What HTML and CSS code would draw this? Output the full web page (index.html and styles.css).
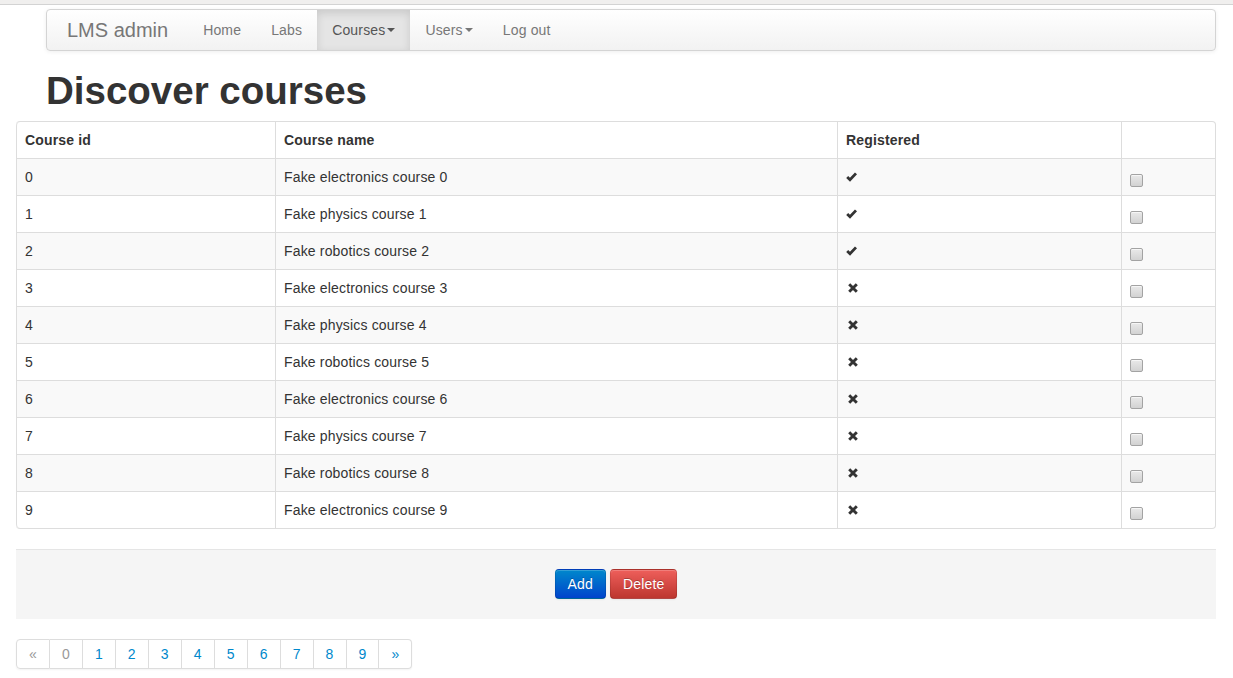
FILE: index.html
```html
<!DOCTYPE html>
<html>
<head>
<meta charset="utf-8">
<title>LMS admin</title>
<link rel="stylesheet" href="styles.css">
</head>
<body>
<div class="topstrip"></div>
<div class="page">
  <div class="container">
    <div class="navbar">
      <a class="brand" href="#">LMS admin</a>
      <ul class="nav">
        <li><a href="#">Home</a></li>
        <li><a href="#">Labs</a></li>
        <li class="active"><a href="#">Courses<b class="caret"></b></a></li>
        <li><a href="#">Users<b class="caret"></b></a></li>
        <li><a href="#">Log out</a></li>
      </ul>
    </div>
    <h1 class="title">Discover courses</h1>
  </div>

  <table class="courses">
    <thead>
      <tr><th class="c-id">Course id</th><th class="c-name">Course name</th><th class="c-reg">Registered</th><th class="c-sel"></th></tr>
    </thead>
    <tbody>
      <tr><td>0</td><td>Fake electronics course 0</td><td><svg class="icon" viewBox="0 0 14 14"><path d="M1.2 7 L4 9.8 L10 3.4" fill="none" stroke="#333" stroke-width="2.8"/></svg></td><td><input type="checkbox" class="cb"></td></tr>
      <tr><td>1</td><td>Fake physics course 1</td><td><svg class="icon" viewBox="0 0 14 14"><path d="M1.2 7 L4 9.8 L10 3.4" fill="none" stroke="#333" stroke-width="2.8"/></svg></td><td><input type="checkbox" class="cb"></td></tr>
      <tr><td>2</td><td>Fake robotics course 2</td><td><svg class="icon" viewBox="0 0 14 14"><path d="M1.2 7 L4 9.8 L10 3.4" fill="none" stroke="#333" stroke-width="2.8"/></svg></td><td><input type="checkbox" class="cb"></td></tr>
      <tr><td>3</td><td>Fake electronics course 3</td><td><svg class="icon" viewBox="0 0 14 14"><path d="M3.2 3.2 L10.8 10.8 M10.8 3.2 L3.2 10.8" fill="none" stroke="#333" stroke-width="2.9"/></svg></td><td><input type="checkbox" class="cb"></td></tr>
      <tr><td>4</td><td>Fake physics course 4</td><td><svg class="icon" viewBox="0 0 14 14"><path d="M3.2 3.2 L10.8 10.8 M10.8 3.2 L3.2 10.8" fill="none" stroke="#333" stroke-width="2.9"/></svg></td><td><input type="checkbox" class="cb"></td></tr>
      <tr><td>5</td><td>Fake robotics course 5</td><td><svg class="icon" viewBox="0 0 14 14"><path d="M3.2 3.2 L10.8 10.8 M10.8 3.2 L3.2 10.8" fill="none" stroke="#333" stroke-width="2.9"/></svg></td><td><input type="checkbox" class="cb"></td></tr>
      <tr><td>6</td><td>Fake electronics course 6</td><td><svg class="icon" viewBox="0 0 14 14"><path d="M3.2 3.2 L10.8 10.8 M10.8 3.2 L3.2 10.8" fill="none" stroke="#333" stroke-width="2.9"/></svg></td><td><input type="checkbox" class="cb"></td></tr>
      <tr><td>7</td><td>Fake physics course 7</td><td><svg class="icon" viewBox="0 0 14 14"><path d="M3.2 3.2 L10.8 10.8 M10.8 3.2 L3.2 10.8" fill="none" stroke="#333" stroke-width="2.9"/></svg></td><td><input type="checkbox" class="cb"></td></tr>
      <tr><td>8</td><td>Fake robotics course 8</td><td><svg class="icon" viewBox="0 0 14 14"><path d="M3.2 3.2 L10.8 10.8 M10.8 3.2 L3.2 10.8" fill="none" stroke="#333" stroke-width="2.9"/></svg></td><td><input type="checkbox" class="cb"></td></tr>
      <tr><td>9</td><td>Fake electronics course 9</td><td><svg class="icon" viewBox="0 0 14 14"><path d="M3.2 3.2 L10.8 10.8 M10.8 3.2 L3.2 10.8" fill="none" stroke="#333" stroke-width="2.9"/></svg></td><td><input type="checkbox" class="cb"></td></tr>
    </tbody>
  </table>

  <div class="form-actions">
    <button class="btn btn-primary">Add</button>
    <button class="btn btn-danger">Delete</button>
  </div>

  <ul class="pagination">
    <li class="disabled"><a href="#">&laquo;</a></li>
    <li class="active"><a href="#">0</a></li>
    <li><a href="#">1</a></li>
    <li><a href="#">2</a></li>
    <li><a href="#">3</a></li>
    <li><a href="#">4</a></li>
    <li><a href="#">5</a></li>
    <li><a href="#">6</a></li>
    <li><a href="#">7</a></li>
    <li><a href="#">8</a></li>
    <li><a href="#">9</a></li>
    <li><a href="#">&raquo;</a></li>
  </ul>
</div>
</body>
</html>
```

FILE: styles.css
```css
html, body {
  margin: 0;
  padding: 0;
}
body {
  font-family: "Liberation Sans", Arial, Helvetica, sans-serif;
  font-size: 14px;
  line-height: 20px;
  letter-spacing: 0.16px;
  color: #333;
  background: #fff;
}
a { text-decoration: none; }

.topstrip {
  height: 4px;
  background: #f0efee;
  border-bottom: 1px solid #d3d3d3;
}

.page {
  width: 1200px;
  margin-left: 16px;
}

.container {
  width: 1170px;
  margin-left: 30px;
}

/* navbar */
.navbar {
  margin-top: 4px;
  margin-bottom: 20px;
  height: 42px;
  box-sizing: border-box;
  padding: 0 20px;
  display: flex;
  background: linear-gradient(to bottom, #ffffff, #f2f2f2);
  border: 1px solid #d4d4d4;
  border-radius: 4px;
  box-shadow: 0 1px 4px rgba(0,0,0,0.065);
}
.brand {
  display: block;
  margin-left: -20px;
  padding: 10px 20px;
  font-size: 20px;
  font-weight: 200;
  letter-spacing: 0;
  color: #777;
}
.nav {
  display: flex;
  list-style: none;
  margin: 0;
  padding: 0;
}
.nav a {
  display: block;
  padding: 10px 15px;
  color: #777;
  line-height: 20px;
}
.nav .active a {
  color: #555;
  background: #e5e5e5;
  box-shadow: inset 0 3px 8px rgba(0,0,0,0.125);
}
.caret {
  display: inline-block;
  width: 0;
  height: 0;
  margin-top: 8px;
  margin-left: 2px;
  vertical-align: top;
  border-top: 4px solid #777;
  border-left: 4px solid transparent;
  border-right: 4px solid transparent;
}
.nav .active .caret { border-top-color: #555; }

.title {
  margin: 0 0 10px;
  font-size: 38.5px;
  line-height: 40px;
  font-weight: bold;
  letter-spacing: 0;
  color: #333;
}

/* table */
.courses {
  width: 1200px;
  border-collapse: separate;
  border-spacing: 0;
  border: 1px solid #ddd;
  border-left: 0;
  border-radius: 4px;
  margin-bottom: 20px;
  table-layout: fixed;
}
.courses th, .courses td {
  padding: 8px;
  line-height: 20px;
  text-align: left;
  vertical-align: top;
  border-left: 1px solid #ddd;
  border-top: 1px solid #ddd;
}
.courses thead th { border-top: 0; font-weight: bold; }
.courses tbody tr:nth-child(odd) td { background: #f9f9f9; }
.courses thead th:first-child { border-top-left-radius: 4px; }
.courses thead th:last-child { border-top-right-radius: 4px; }
.courses tbody tr:last-child td:first-child { border-bottom-left-radius: 4px; }
.courses tbody tr:last-child td:last-child { border-bottom-right-radius: 4px; }
.c-id { width: 242px; }
.c-name { width: 545px; }
.c-reg { width: 267px; }
.c-sel { width: 77px; }

.icon {
  display: inline-block;
  width: 14px;
  height: 14px;
  vertical-align: top;
  margin-top: 3px;
}

.cb {
  -webkit-appearance: none;
  appearance: none;
  display: inline-block;
  vertical-align: top;
  box-sizing: border-box;
  width: 13px;
  height: 13px;
  margin: 7px 0 0 0;
  border: 1px solid #a3a3a3;
  border-radius: 2px;
  background: linear-gradient(to bottom, #e9e9e9, #d2d2d2);
  box-shadow: inset 0 1px 0 rgba(255,255,255,0.6);
}

/* form actions */
.form-actions {
  margin: 20px 0;
  padding: 19px 20px 20px;
  background: #f5f5f5;
  border-top: 1px solid #e5e5e5;
  display: flex;
  justify-content: center;
  gap: 4px;
}
.btn {
  font-family: inherit;
  font-size: 14px;
  line-height: 20px;
  letter-spacing: 0.16px;
  padding: 4px 12px;
  margin: 0;
  color: #fff;
  text-shadow: 0 -1px 0 rgba(0,0,0,0.25);
  border: 1px solid;
  border-color: rgba(0,0,0,0.1) rgba(0,0,0,0.1) rgba(0,0,0,0.25);
  border-radius: 4px;
  box-shadow: inset 0 1px 0 rgba(255,255,255,0.2), 0 1px 2px rgba(0,0,0,0.05);
  cursor: pointer;
}
.btn-primary {
  background: linear-gradient(to bottom, #0088cc, #0044cc);
}
.btn-danger {
  background: linear-gradient(to bottom, #ee5f5b, #bd362f);
}

/* pagination */
.pagination {
  display: inline-flex;
  list-style: none;
  margin: 0 0 20px;
  padding: 0;
  border-radius: 4px;
  box-shadow: 0 1px 2px rgba(0,0,0,0.05);
}
.pagination a {
  display: block;
  padding: 4px 12px;
  line-height: 20px;
  color: #0088cc;
  background: #fff;
  border: 1px solid #ddd;
  border-left-width: 0;
}
.pagination li:first-child a {
  border-left-width: 1px;
  border-radius: 4px 0 0 4px;
}
.pagination li:last-child a {
  border-radius: 0 4px 4px 0;
}
.pagination .disabled a,
.pagination .active a {
  color: #999;
}
```
